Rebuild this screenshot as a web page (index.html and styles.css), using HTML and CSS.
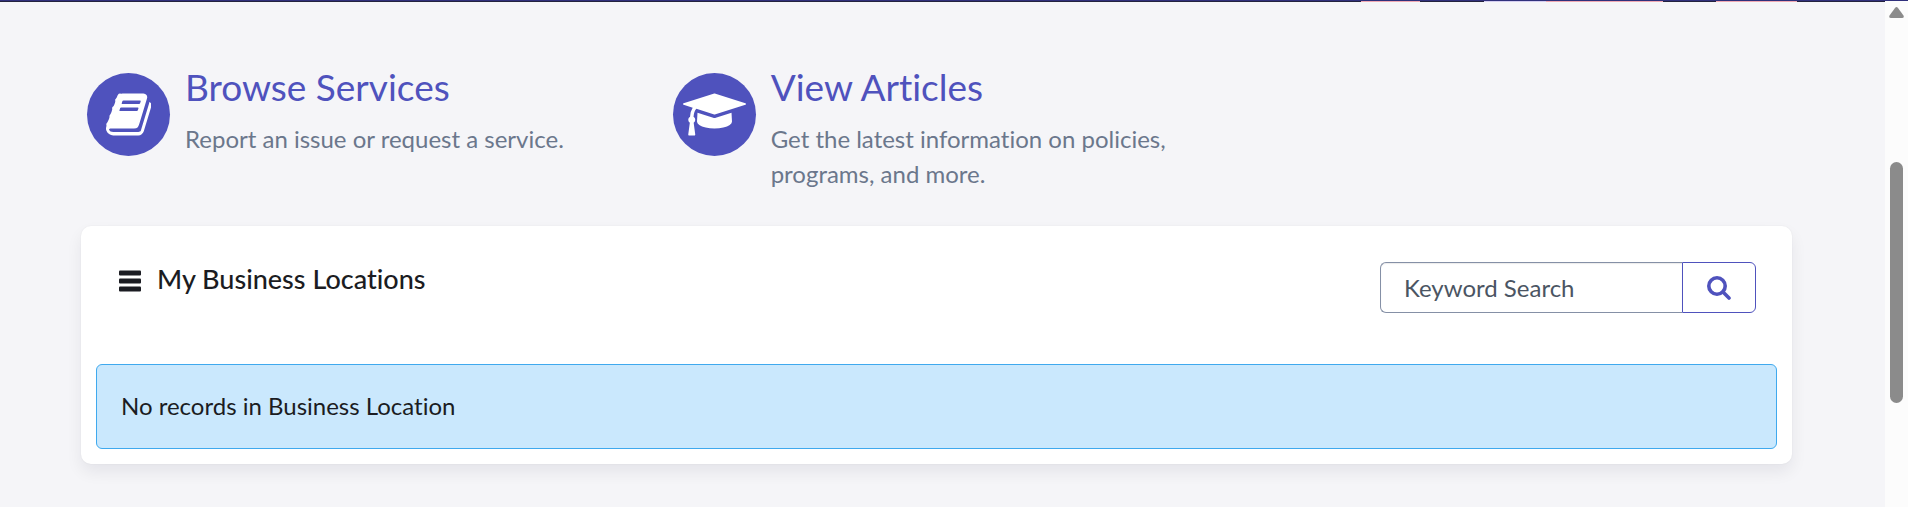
FILE: index.html
```html
<!DOCTYPE html>
<html lang="en">
<head>
<meta charset="utf-8">
<title>Service Portal</title>
<link rel="stylesheet" href="styles.css">
</head>
<body>
<div class="banner-edge"></div>
<div class="viewport">
  <main class="content">
    <section class="links">
      <div class="link-item">
        <span class="circle">
          <svg class="glyph" viewBox="0 0 1664 1792" aria-hidden="true"><path d="M1639 478q40 57 18 129l-275 906q-19 64-76.5 107.5t-122.5 43.5h-923q-77 0-148.5-53.5t-99.5-131.5q-24-67-2-127 0-4 3-27t4-37q1-8-3-21.5t-3-19.5q2-11 8-21t16.5-23.5 16.5-23.5q23-38 45-91.5t30-91.5q3-10 .5-30t-.5-28q3-11 17-28t17-23q21-36 42-92t25-90q1-9-2.5-32t.5-28q4-13 22-30.5t22-22.5q19-26 42.5-84.5t27.5-96.5q1-8-3-25.5t-2-26.5q2-8 9-18t18-23 17-21q8-12 16.5-30.5t15-35 16-36 19.5-32 26.5-23.5 36-11.5 47.5 5.5l-1 3q38-9 51-9h761q74 0 114 56t18 130l-274 906q-36 119-71.5 153.5t-128.5 34.5h-869q-27 0-38 15-11 16-1 43 24 70 144 70h923q29 0 56-15.5t35-41.5l300-987q7-22 5-57 38 15 59 43zm-1064 2q-4 13 2 22.5t20 9.5h608q13 0 25.5-9.5t16.5-22.5l21-64q4-13-2-22.5t-20-9.5h-608q-13 0-25.5 9.5t-16.5 22.5zm-83 256q-4 13 2 22.5t20 9.5h608q13 0 25.5-9.5t16.5-22.5l21-64q4-13-2-22.5t-20-9.5h-608q-13 0-25.5 9.5t-16.5 22.5z"/></svg>
        </span>
        <div class="link-text">
          <h2><a href="#">Browse Services</a></h2>
          <p>Report an issue or request a service.</p>
        </div>
      </div>
      <div class="link-item">
        <span class="circle">
          <svg class="glyph" viewBox="0 0 2304 1792" aria-hidden="true"><path d="M1774 836l18 316q4 69-82 128t-235 93.5-323 34.5-323-34.5-235-93.5-82-128l18-316 574 181q22 7 48 7t48-7zm530-324q0 23-22 31l-1120 352q-4 1-10 1t-10-1l-652-206q-43 34-71 111.5t-34 178.5q63 36 63 109 0 69-58 107l58 433q2 14-8 25-9 11-24 11h-192q-15 0-24-11-10-11-8-25l58-433q-58-38-58-107 0-73 65-111 11-207 98-330l-333-104q-22-8-22-31t22-31l1120-352q4-1 10-1t10 1l1120 352q22 8 22 31z"/></svg>
        </span>
        <div class="link-text">
          <h2><a href="#">View Articles</a></h2>
          <p>Get the latest information on policies, programs, and more.</p>
        </div>
      </div>
    </section>
    <section class="card">
      <header class="card-head">
        <h3 class="card-title">
          <svg class="bars" viewBox="0 0 22 22" aria-hidden="true"><rect y="0.5" width="22" height="5" rx="1"/><rect y="8.5" width="22" height="5" rx="1"/><rect y="16.5" width="22" height="5" rx="1"/></svg>
          My Business Locations
        </h3>
        <form class="search">
          <input type="text" placeholder="Keyword Search" aria-label="Keyword Search">
          <button type="button" aria-label="Search">
            <svg class="lens" viewBox="0 0 24 24" aria-hidden="true"><circle cx="10" cy="10" r="8.2"/><path d="M16 16l6 6"/></svg>
          </button>
        </form>
      </header>
      <div class="notice">No records in Business Location</div>
    </section>
  </main>
  <div class="scrollbar" aria-hidden="true">
    <svg class="arrow" viewBox="0 0 15 11"><path d="M6 1Q7.500-1 9 1L14.500 8.500Q15.500 11 13 11H2Q-.5 11 .5 8.500Z"/></svg>
    <div class="track"><div class="thumb"></div></div>
  </div>
</div>
</body>
</html>
```
FILE: styles.css
```css
* {
  box-sizing: border-box;
}

body {
  margin: 0;
  min-height: 100vh;
  display: flex;
  flex-direction: column;
  background: #f5f5f8;
  color: #1b1c22;
  font-family: Lato, "Liberation Sans", sans-serif;
  font-size: 24px;
  line-height: 35px;
  font-variant-ligatures: none;
}

h2,
h3,
p {
  margin: 0;
  font-weight: 400;
}

.banner-edge {
  height: 1px;
  background: #30307c;
}

.viewport {
  flex: 1;
  display: flex;
}

.content {
  flex: 1;
  padding: 0 93px 42px 81px;
  border-top: 1px solid;
  border-image: linear-gradient(to right, #24223f 72.2%, #f0a9b4 72.2%, #f0a9b4 75.3%, #24223f 75.3%, #24223f 78.7%, #d4cdf0 78.7%, #d4cdf0 82%, #f0a9b4 82%, #f0a9b4 88.2%, #24223f 88.2%, #24223f 91%, #f0a9b4 91%, #f0a9b4 95.3%, #24223f 95.3%) 1;
}

.links {
  display: grid;
  grid-template-columns: repeat(3, 1fr);
  gap: 52px;
  padding: 63px 0 35px 6px;
}

.link-item {
  display: flex;
  gap: 15px;
}

.circle {
  flex: none;
  width: 83px;
  height: 83px;
  margin-top: 8px;
  border-radius: 50%;
  background: #4f52bd;
  display: flex;
  align-items: center;
  justify-content: center;
}

.glyph {
  height: 49px;
  fill: #fff;
}

.link-text h2 {
  margin-bottom: 12px;
  font-size: 37px;
  line-height: 44px;
}

.link-text a {
  color: #4f52bd;
  text-decoration: none;
}

.link-text p {
  color: #6b778c;
}

.card {
  padding: 36px 15px 15px;
  border-radius: 10px;
  background: #fff;
  box-shadow: 0 8px 16px rgba(20, 20, 40, 0.07), 0 0 2px rgba(20, 20, 40, 0.06);
}

.card-head {
  display: flex;
  justify-content: space-between;
  align-items: flex-start;
  padding: 0 21px 0 23px;
  margin-bottom: 51px;
}

.card-title {
  display: flex;
  align-items: center;
  gap: 16px;
  font-size: 27px;
  font-weight: 500;
  line-height: 33px;
}

.bars {
  width: 22px;
  height: 22px;
  margin-top: 4px;
  fill: #1b1c22;
}

.search {
  display: flex;
  width: 376px;
  height: 51px;
}

.search input {
  flex: 1;
  min-width: 0;
  padding: 0 23px;
  border: 1px solid #8590a6;
  border-right: 0;
  border-radius: 6px 0 0 6px;
  background: #fff;
  box-shadow: inset 0 1px 1px rgba(0, 0, 0, 0.08);
  color: #4b5563;
  font: inherit;
}

.search input::placeholder {
  color: #4b5563;
  opacity: 1;
}

.search button {
  width: 74px;
  padding: 0;
  border: 1px solid #4f52bd;
  border-radius: 0 6px 6px 0;
  background: #fff;
  display: flex;
  align-items: center;
  justify-content: center;
}

.lens {
  width: 24px;
  height: 24px;
  fill: none;
  stroke: #4f52bd;
  stroke-width: 3.6;
  stroke-linecap: round;
}

.notice {
  padding: 23px 24px 25px;
  border: 1px solid #3fa9ee;
  border-radius: 6px;
  background: #cae8fd;
}

.scrollbar {
  width: 23px;
  padding: 6px 4px 0 4px;
  background: #fcfcfc;
  display: flex;
  flex-direction: column;
}

.arrow {
  width: 15px;
  height: 11px;
  fill: #8b8b8b;
}

.track {
  flex: 1;
  padding: 144px 1px 0;
}

.thumb {
  width: 13px;
  height: 241px;
  border-radius: 7px;
  background: #8b8b8b;
}
```
